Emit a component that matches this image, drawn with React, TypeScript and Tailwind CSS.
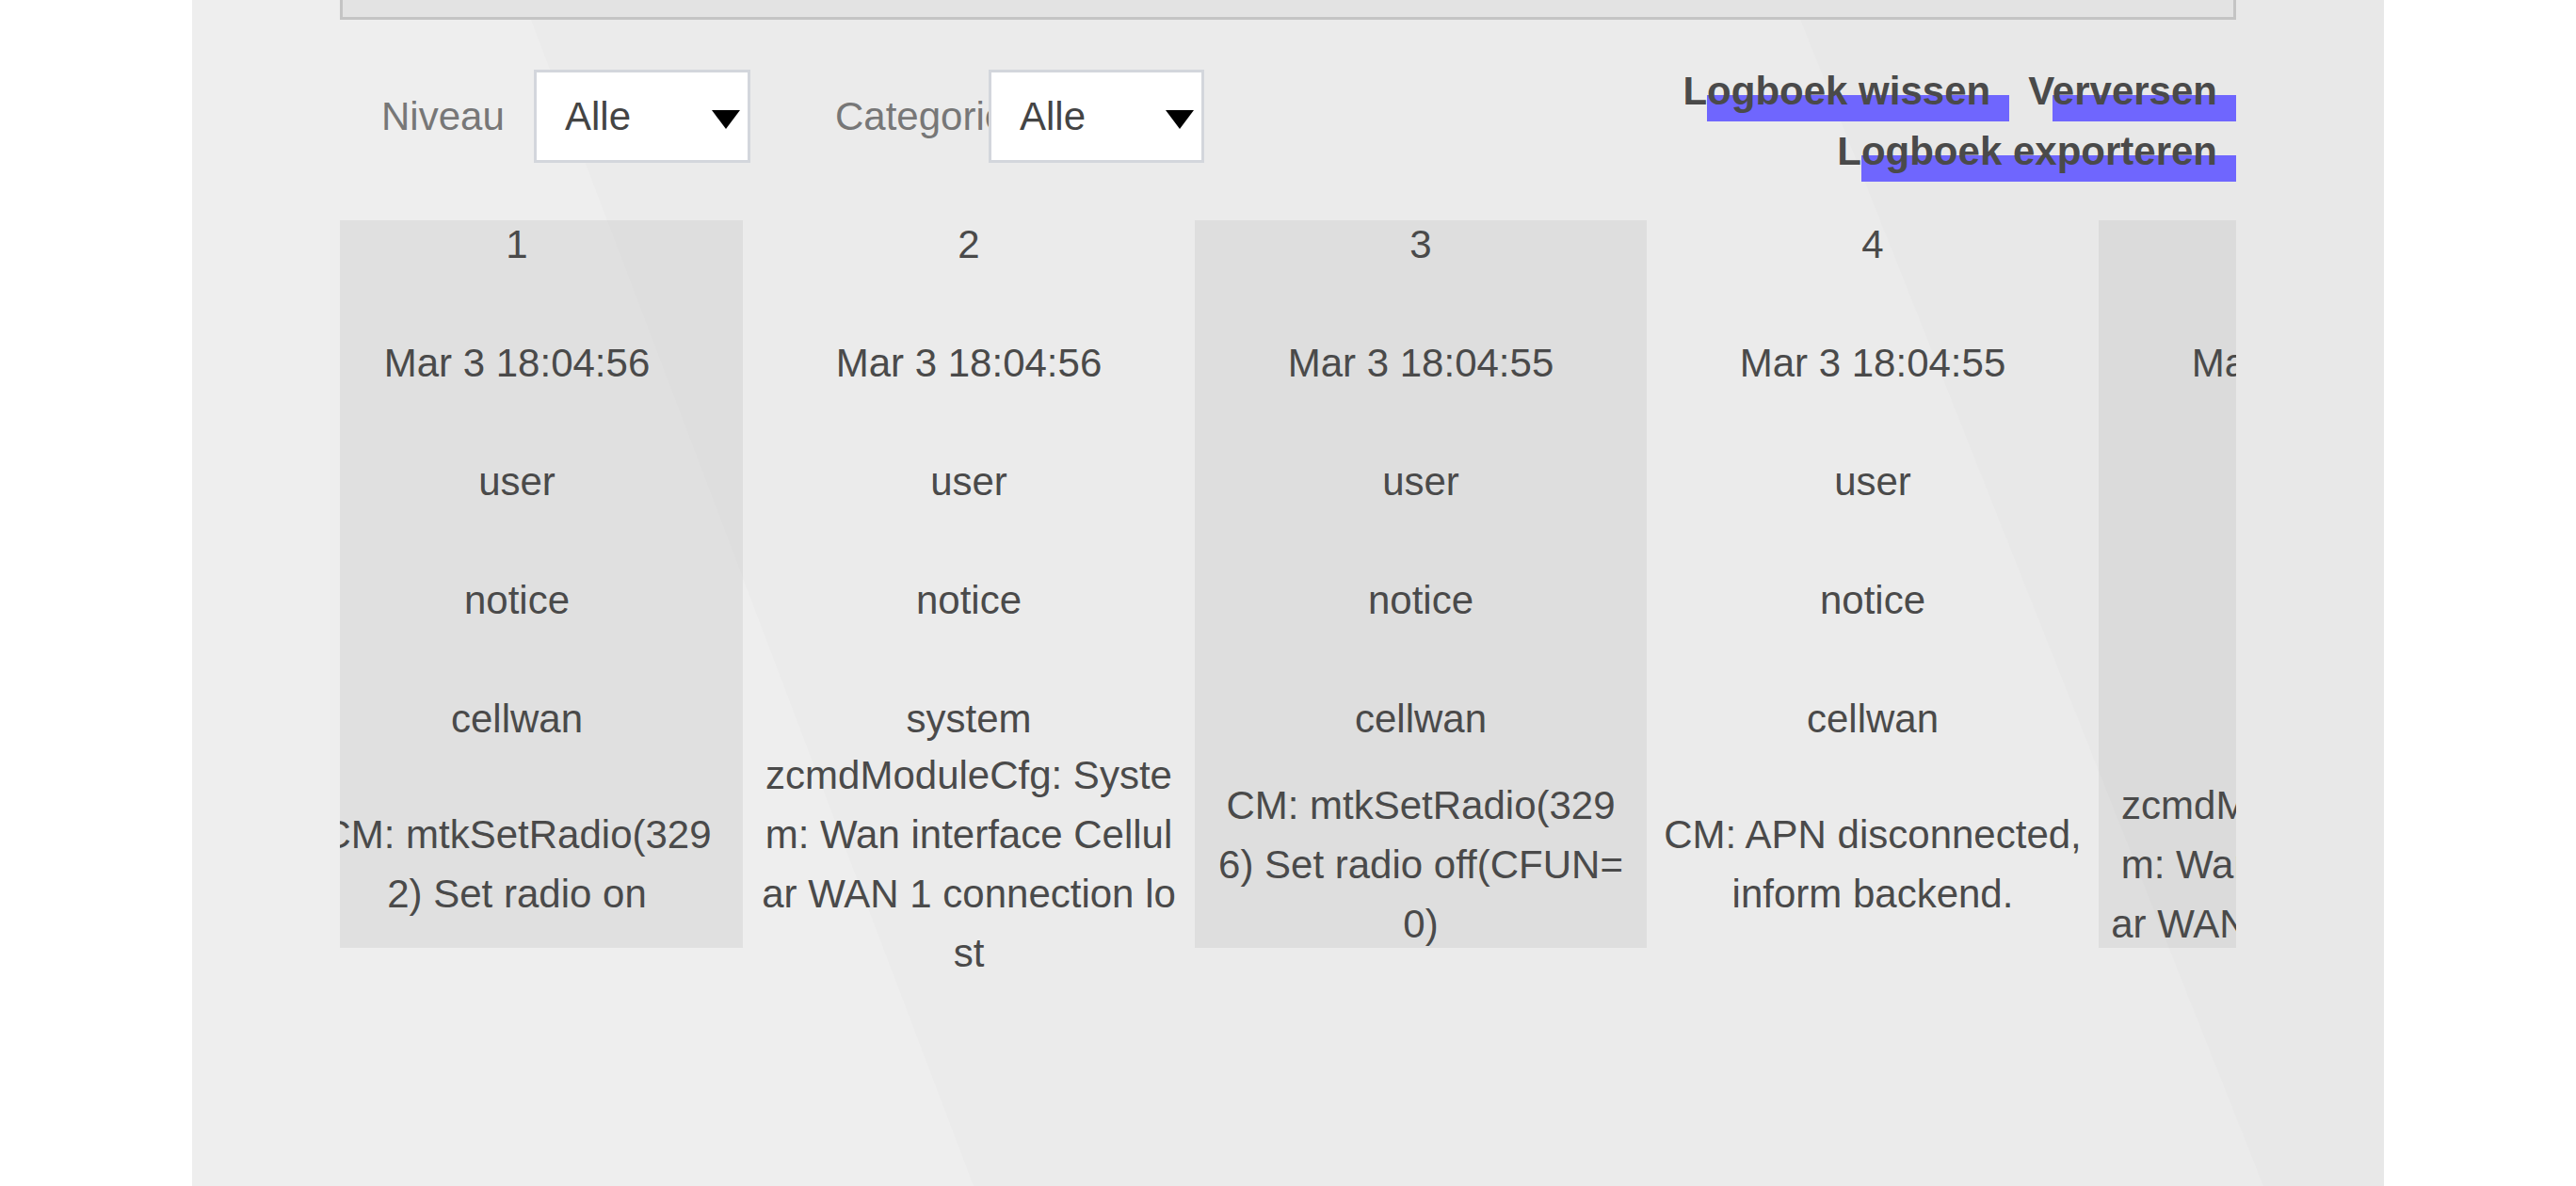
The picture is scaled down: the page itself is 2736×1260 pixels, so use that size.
import React from 'react';

type LogEntry = {
  id: number;
  time: string;
  facility: string;
  level: string;
  category: string;
  message: string[];
};

const logs: LogEntry[] = [
  {
    id: 1,
    time: 'Mar 3 18:04:56',
    facility: 'user',
    level: 'notice',
    category: 'cellwan',
    message: ['CM: mtkSetRadio(329', '2) Set radio on'],
  },
  {
    id: 2,
    time: 'Mar 3 18:04:56',
    facility: 'user',
    level: 'notice',
    category: 'system',
    message: ['zcmdModuleCfg: Syste', 'm: Wan interface Cellul', 'ar WAN 1 connection lo', 'st'],
  },
  {
    id: 3,
    time: 'Mar 3 18:04:55',
    facility: 'user',
    level: 'notice',
    category: 'cellwan',
    message: ['CM: mtkSetRadio(329', '6) Set radio off(CFUN=', '0)'],
  },
  {
    id: 4,
    time: 'Mar 3 18:04:55',
    facility: 'user',
    level: 'notice',
    category: 'cellwan',
    message: ['CM: APN disconnected,', 'inform backend.'],
  },
  {
    id: 5,
    time: 'Mar 3 18:04:55',
    facility: 'user',
    level: 'notice',
    category: 'system',
    message: ['zcmdModuleCfg: Syste', 'm: Wan interface Cellul', 'ar WAN 1 connection up'],
  },
];

function FakeSelect({ value, width }: { value: string; width: string }) {
  return (
    <div
      className={`${width} h-[99px] shrink-0 bg-white border-[3px] border-[#d3d6dc] flex items-center justify-between pl-[30px] pr-[8px] text-[#444]`}
    >
      <span>{value}</span>
      <svg width="30" height="20" viewBox="0 0 30 20" className="mt-[6px]">
        <polygon points="0,0 30,0 15,20" fill="#000" />
      </svg>
    </div>
  );
}

function ActionLink({ label }: { label: string }) {
  return (
    <span className="relative inline-block pr-[20px] font-bold text-[#4a4a4a] cursor-pointer">
      {/* offset highlight bar */}
      <span className="absolute left-[26px] right-0 top-[36px] h-[28px] bg-[#6f66fe]" />
      <span className="relative">{label}</span>
    </span>
  );
}

function LogColumn({ entry, shaded }: { entry: LogEntry; shaded: boolean }) {
  const cell = 'h-[126px] shrink-0 leading-[52px] text-center whitespace-nowrap';
  return (
    <div className={`w-[480px] shrink-0 flex flex-col pb-[35px] ${shaded ? 'bg-black/[0.055]' : ''}`}>
      <div className={cell}>{entry.id}</div>
      <div className={cell}>{entry.time}</div>
      <div className={cell}>{entry.facility}</div>
      <div className={cell}>{entry.level}</div>
      <div className={cell}>{entry.category}</div>
      <div className="h-[108px] shrink-0 flex flex-col items-center justify-center leading-[63px] whitespace-nowrap overflow-visible">
        {entry.message.map((line, i) => (
          <div key={i}>{line}</div>
        ))}
      </div>
    </div>
  );
}

export default function App() {
  return (
    <div className="min-h-[1260px] bg-white font-['Liberation_Sans',Arial,sans-serif] text-[42px] text-[#4a4a4a]">
      <div className="relative mx-[204px] min-h-[1260px] bg-[#ebebeb] overflow-hidden px-[157px]">
        {/* subtle diagonal background shapes */}
        <svg
          className="absolute inset-0 w-full h-full pointer-events-none"
          viewBox="0 0 2328 1260"
          preserveAspectRatio="none"
        >
          <polygon points="0,0 352,0 830,1260 0,1260" fill="#eeeeee" />
          <polygon points="1700,0 2328,0 2328,1260 2200,1260" fill="#e8e8e8" />
        </svg>

        <div className="relative">
          {/* previous section box, cut off at the top */}
          <div className="h-[21px] bg-[#e3e3e3] border-x-[3px] border-b-[3px] border-[#c4c4c4]" />

          {/* toolbar */}
          <div className="flex justify-between items-start pt-[44px]">
            <div className="flex items-center gap-[90px] pl-[44px] mt-[9px]">
              <div className="flex items-center">
                <span className="w-[162px] overflow-hidden whitespace-nowrap text-[#777]">Niveau</span>
                <FakeSelect value="Alle" width="w-[230px]" />
              </div>
              <div className="flex items-center">
                <span className="w-[163px] overflow-hidden whitespace-nowrap text-[#777]">Categorie</span>
                <FakeSelect value="Alle" width="w-[229px]" />
              </div>
            </div>

            <div className="flex flex-col items-end leading-[64px]">
              <div className="flex gap-[20px]">
                <ActionLink label="Logboek wissen" />
                <ActionLink label="Verversen" />
              </div>
              <ActionLink label="Logboek exporteren" />
            </div>
          </div>

          {/* transposed log table, scrolled horizontally */}
          <div className="mt-[41px] overflow-x-clip overflow-y-visible">
            <div className="flex -ml-[52px]">
              {logs.map((entry, i) => (
                <LogColumn key={entry.id} entry={entry} shaded={i % 2 === 0} />
              ))}
            </div>
          </div>
        </div>
      </div>
    </div>
  );
}
